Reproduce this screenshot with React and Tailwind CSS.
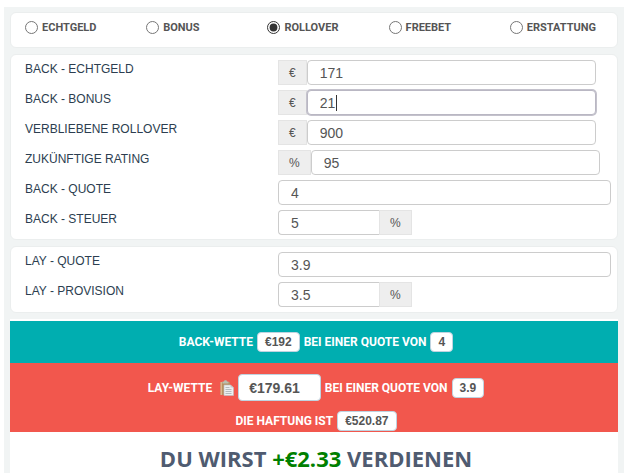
import { useState } from "react";
import clsx from "clsx";

const MODES = ["ECHTGELD", "BONUS", "ROLLOVER", "FREEBET", "ERSTATTUNG"];

const Card = ({ children, className }) => (
  <div
    className={clsx(
      "rounded-md border border-[#ebeeee] bg-white",
      className,
    )}
  >
    {children}
  </div>
);

const Addon = ({ children }) => (
  <span className="flex items-center border border-[#e4e4e4] bg-[#eeeeee] px-2.5 text-xs text-[#555555]">
    {children}
  </span>
);

const Field = ({ id, label, value, prefix, suffix, active, onChange }) => (
  <div className="grid grid-cols-[253fr_333fr]">
    <label
      htmlFor={id}
      className="pt-px text-xs leading-4 text-[#2c3e50]"
    >
      {label}
    </label>
    <div
      className={clsx(
        "flex h-[25px]",
        prefix === "€" && "mr-[15px]",
        prefix === "%" && "mr-[11px]",
      )}
    >
      {prefix && <Addon>{prefix}</Addon>}
      <div className={clsx("relative", suffix ? "w-[101px]" : "flex-1")}>
        <input
          id={id}
          type="text"
          value={value}
          onChange={(e) => onChange(id, e.target.value)}
          className={clsx(
            "h-full w-full border bg-white px-3 text-sm text-[#555555] outline-none",
            suffix ? "rounded-l border-r-0" : "rounded",
            active
              ? "border-[#b9b7c3] caret-transparent ring-1 ring-[#c4c2cc]"
              : "border-[#cccccc]",
          )}
        />
        {active && (
          <span className="absolute top-[5px] left-[29px] h-4 w-px bg-[#333333]" />
        )}
      </div>
      {suffix && <Addon>{suffix}</Addon>}
    </div>
  </div>
);

const Chip = ({ children, large }) => (
  <span
    className={clsx(
      "flex items-center rounded border border-[#bfd3e0] bg-white font-['Liberation_Sans',sans-serif] font-bold text-[#555555]",
      large ? "h-[27px] pr-5 pl-2.5 text-sm" : "h-5 px-[7px] text-xs",
    )}
  >
    {children}
  </span>
);

const ClipboardIcon = () => (
  <svg width="14" height="16" viewBox="0 0 14 16" aria-hidden="true">
    <path d="M.5 2h9.500v12.500L.5 15z" fill="#b98f60" />
    <path d="M.5 2H2v13H.5z" fill="#dcb88c" />
    <path d="M2.500 1.500H4L4.500.3h2L7 1.500h1.500v2h-6z" fill="#b9c0b0" />
    <path
      d="M4 5h6.500L13.500 7.500v8H4z"
      fill="#eceff0"
      stroke="#b9bfc2"
      strokeWidth=".6"
    />
    <path
      d="M5.500 7.500h4M5.500 9.500h6M5.500 11.500h6M5.500 13.500h6"
      stroke="#a6aeb3"
      strokeWidth=".8"
    />
    <path d="M10.500 5v2.500h3z" fill="#c3cbcf" />
  </svg>
);

const INITIAL = {
  backCash: "171",
  backBonus: "21",
  rollover: "900",
  rating: "95",
  backOdds: "4",
  backTax: "5",
  layOdds: "3.9",
  layFee: "3.5",
};

export default function App() {
  const [mode, setMode] = useState("ROLLOVER");
  const [values, setValues] = useState(INITIAL);

  const update = (id, value) => setValues({ ...values, [id]: value });

  const field = (id, label, rest) => (
    <Field
      id={id}
      label={label}
      value={values[id]}
      onChange={update}
      {...rest}
    />
  );

  return (
    <div className="bg-white pt-[7px] pr-[7px] pl-1 font-['Liberation_Sans',sans-serif]">
      <main className="flex flex-col gap-1.5 bg-[#f1f4f4] px-1.5 pt-[5px]">
        <Card className="grid grid-cols-5 pt-1.5 pb-[11px]">
          {MODES.map((m) => (
            <label
              key={m}
              className="flex items-center gap-1 pl-3.5 font-['Roboto',sans-serif] text-[11px] leading-[17px] font-bold text-[#555555]"
            >
              <input
                type="radio"
                name="mode"
                checked={mode === m}
                onChange={() => setMode(m)}
                className="size-[13px] accent-[#333333]"
              />
              {m}
            </label>
          ))}
        </Card>

        <Card className="flex flex-col gap-[5px] pt-[5px] pr-1.5 pb-1 pl-3.5">
          {field("backCash", "BACK - ECHTGELD", { prefix: "€" })}
          {field("backBonus", "BACK - BONUS", { prefix: "€", active: true })}
          {field("rollover", "VERBLIEBENE ROLLOVER", { prefix: "€" })}
          {field("rating", "ZUKÜNFTIGE RATING", { prefix: "%" })}
          {field("backOdds", "BACK - QUOTE")}
          {field("backTax", "BACK - STEUER", { suffix: "%" })}
        </Card>

        <Card className="flex flex-col gap-[5px] py-[5px] pr-1.5 pl-3.5">
          {field("layOdds", "LAY - QUOTE")}
          {field("layFee", "LAY - PROVISION", { suffix: "%" })}
        </Card>

        <section className="bg-white pt-0.5 font-['Roboto',sans-serif] text-xs font-bold text-white">
          <div className="flex h-[42px] items-center justify-center gap-1 bg-[#00aeb0] pl-1">
            BACK-WETTE <Chip>€192</Chip> BEI EINER QUOTE VON <Chip>4</Chip>
          </div>
          <div className="flex flex-col gap-2.5 bg-[#f2574d] pt-[11px] pb-px pl-1">
            <div className="flex items-center justify-center gap-1">
              LAY-WETTE
              <button type="button" aria-label="Kopieren" className="ml-1">
                <ClipboardIcon />
              </button>
              <Chip large>€179.61</Chip> BEI EINER QUOTE VON <Chip>3.9</Chip>
            </div>
            <div className="flex items-center justify-center gap-1">
              DIE HAFTUNG IST <Chip>€520.87</Chip>
            </div>
          </div>
          <h2 className="pt-[11px] pl-1 text-center font-['Open_Sans',sans-serif] text-[22px] leading-[30px] font-bold text-[#4f5b70]">
            DU WIRST <span className="text-[#008000]">+€2.33</span> VERDIENEN
          </h2>
        </section>
      </main>
    </div>
  );
}
